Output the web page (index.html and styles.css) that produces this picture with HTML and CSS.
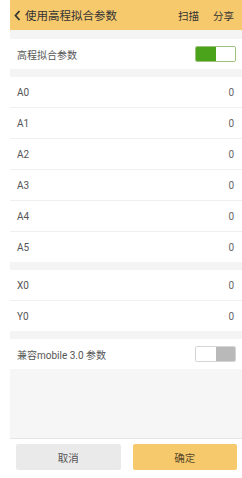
FILE: index.html
```html
<!DOCTYPE html>
<html lang="zh">
<head>
<meta charset="utf-8">
<link rel="stylesheet" href="styles.css">
</head>
<body>
<div class="screen">
  <header class="topbar">
    <div class="back">
      <svg class="back-icon" width="7" height="11" viewBox="0 0 7 11"><path d="M5.5 1 L1.5 5.5 L5.5 10" fill="none" stroke="#333" stroke-width="1.8"/></svg>
      <span class="title">使用高程拟合参数</span>
    </div>
    <div class="actions">
      <span>扫描</span>
      <span>分享</span>
    </div>
  </header>
  <div class="band band-top"></div>
  <div class="row">
    <span class="label">高程拟合参数</span>
    <span class="switch on"><span class="half a"></span><span class="half b"></span></span>
  </div>
  <div class="band"></div>
  <div class="group">
    <div class="row line"><span class="label">A0</span><span class="val">0</span></div>
    <div class="row line"><span class="label">A1</span><span class="val">0</span></div>
    <div class="row line"><span class="label">A2</span><span class="val">0</span></div>
    <div class="row line"><span class="label">A3</span><span class="val">0</span></div>
    <div class="row line"><span class="label">A4</span><span class="val">0</span></div>
    <div class="row"><span class="label">A5</span><span class="val">0</span></div>
  </div>
  <div class="band"></div>
  <div class="group">
    <div class="row line"><span class="label">X0</span><span class="val">0</span></div>
    <div class="row"><span class="label">Y0</span><span class="val">0</span></div>
  </div>
  <div class="band"></div>
  <div class="row">
    <span class="label">兼容mobile 3.0 参数</span>
    <span class="switch off"><span class="half a"></span><span class="half b"></span></span>
  </div>
  <div class="filler"></div>
  <footer class="footer">
    <button class="btn cancel">取消</button>
    <button class="btn ok">确定</button>
  </footer>
</div>
</body>
</html>
```
FILE: styles.css
```css
* { box-sizing: border-box; }
html, body { margin: 0; padding: 0; background: #fff; }
body {
  font-family: "Noto Sans CJK SC", "Noto Sans", sans-serif;
  color: #444;
}
.screen {
  margin-left: 10px;
  width: 232px;
  height: 478px;
  display: flex;
  flex-direction: column;
}
.topbar {
  height: 30px;
  flex: none;
  background: #f6c96d;
  display: flex;
  align-items: center;
  justify-content: space-between;
  padding: 0 8px 0 4px;
  color: #333;
}
.back { display: flex; align-items: center; gap: 4px; }
.back-icon { display: block; }
.title { font-size: 11.5px; letter-spacing: 0; }
.actions { display: flex; gap: 14px; font-size: 10.5px; padding-right: 0; }
.band { height: 8px; flex: none; background: #f4f4f4; }
.band-top { height: 9px; }
.row {
  height: 30px;
  flex: none;
  display: flex;
  align-items: center;
  justify-content: space-between;
  padding: 0 7px 0 7px;
  background: #fff;
  font-size: 10px;
  color: #555;
}
.row.line { height: 31px; border-bottom: 1px solid #f0f0f0; }
.val { font-family: "Roboto", sans-serif; font-size: 10px; color: #666; padding-right: 1px; }
.label { font-size: 10px; }
.row .label:first-child { font-family: "Roboto", "Noto Sans CJK SC", sans-serif; }
.switch {
  display: flex;
  width: 41px;
  height: 16px;
  border: 1px solid #9cc27e;
  border-radius: 2px;
  overflow: hidden;
  margin-right: -1px;
}
.switch .half { flex: 1; }
.switch.on .a { background: #4aa31b; }
.switch.on .b { background: #fff; }
.switch.off { border-color: #d4d4d4; }
.switch.off .a { background: #fff; }
.switch.off .b { background: #b9b9b9; }
.filler { flex: 1; background: #f6f6f6; border-bottom: 1px solid #e6e6e6; }
.footer {
  height: 39px;
  flex: none;
  display: flex;
  gap: 12px;
  padding: 5px 5px 8px 6px;
  background: #fff;
}
.btn {
  flex: 1;
  border: none;
  border-radius: 2px;
  font-family: "Noto Sans CJK SC", sans-serif;
  font-size: 10.5px;
  color: #555;
  padding: 0;
}
.cancel { background: #eaeaea; }
.ok { background: #f6c96d; color: #5a4a2a; }
```
